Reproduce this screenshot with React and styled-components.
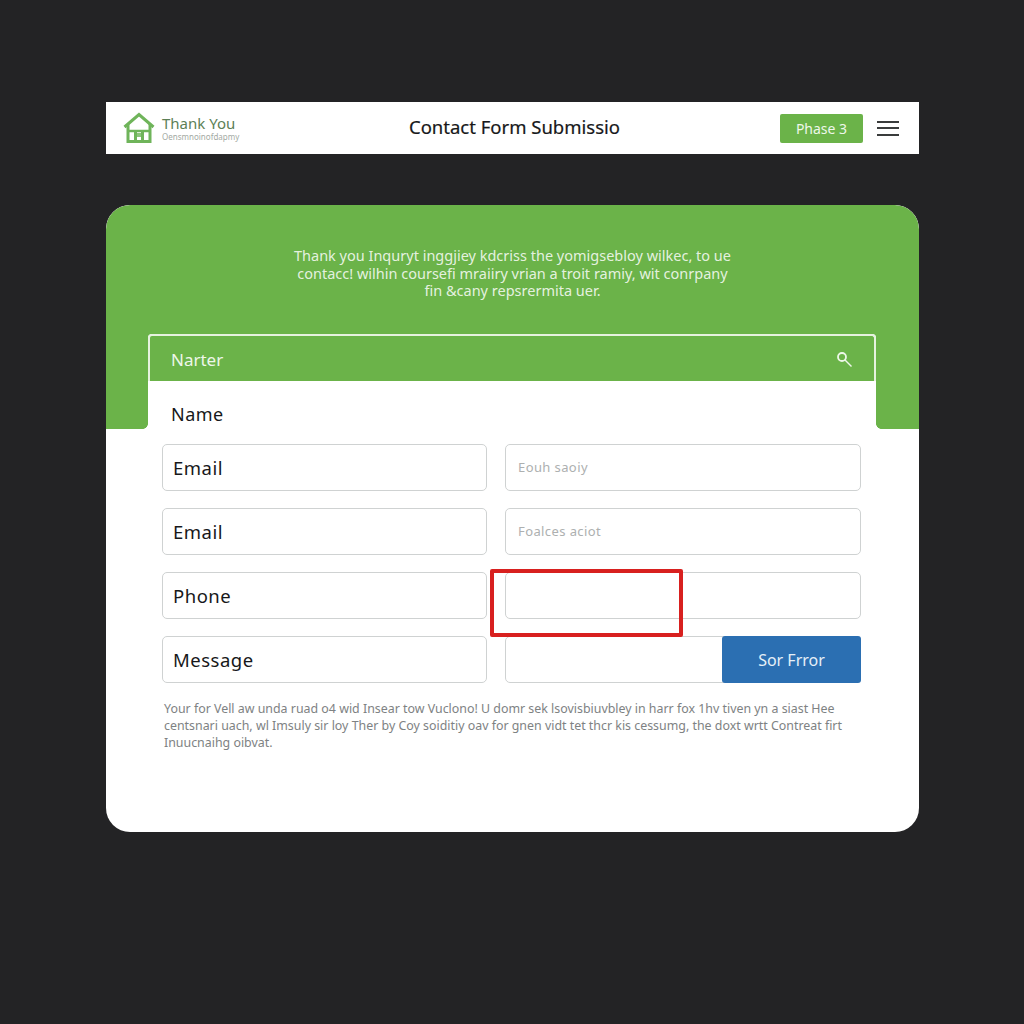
import React from "react";
import styled, { createGlobalStyle } from "styled-components";

const GREEN = "#6bb349";

const GlobalStyle = createGlobalStyle`
  html, body {
    margin: 0;
    padding: 0;
    background: #232325;
  }
  * {
    box-sizing: border-box;
  }
`;

const Page = styled.div`
  width: 1024px;
  height: 1024px;
  padding: 102px 105px 0 106px;
  display: flex;
  flex-direction: column;
  gap: 51px;
  font-family: "Noto Sans", "Open Sans", sans-serif;
  overflow: hidden;
`;

const Header = styled.header`
  height: 52px;
  background: #fff;
  display: grid;
  grid-template-columns: 1fr auto 1fr;
  align-items: center;
  padding: 0 20px 0 17px;
`;

const Brand = styled.div`
  display: flex;
  align-items: center;
  gap: 7px;
`;

const BrandText = styled.div`
  display: flex;
  flex-direction: column;
  margin-top: -2px;
`;

const BrandName = styled.span`
  font-size: 15px;
  line-height: 18px;
  color: #5c7f56;
`;

const BrandSub = styled.span`
  font-size: 8px;
  line-height: 9px;
  color: #a3aaa3;
`;

const Title = styled.h1`
  margin: 0 0 4px 7px;
  font-size: 18.5px;
  font-weight: 400;
  color: #17181a;
  -webkit-text-stroke: 0.2px #17181a;
`;

const HeaderActions = styled.div`
  display: flex;
  justify-content: flex-end;
  align-items: center;
  gap: 14px;
`;

const PhaseBadge = styled.div`
  width: 83px;
  height: 29px;
  background: ${GREEN};
  border-radius: 2px;
  color: #eef7e9;
  font-size: 14px;
  display: flex;
  align-items: center;
  justify-content: center;
`;

const Burger = styled.div`
  width: 22px;
  display: flex;
  flex-direction: column;
  gap: 4.5px;
  span {
    display: block;
    height: 2px;
    background: #3a3c3c;
  }
`;

const Card = styled.main`
  height: 627px;
  background: #fff;
  border-radius: 24px;
  overflow: hidden;
`;

const Hero = styled.section`
  height: 224px;
  background: ${GREEN};
  border-radius: 24px 24px 0 0;
  padding-top: 42px;
  text-align: center;
  color: rgba(255, 255, 255, 0.84);
  font-size: 14.5px;
  line-height: 17.5px;
`;

/* the small white corners where the green flaps meet the panel */
const Panel = styled.section`
  position: relative;
  margin: -95px 43px 0 42px;
  height: 95px;
  background: #fff;
  border-radius: 4px 4px 0 0;

  &::before,
  &::after {
    content: "";
    position: absolute;
    bottom: 0;
    width: 5px;
    height: 5px;
  }
  &::before {
    left: -5px;
    background: radial-gradient(circle at 0 0, ${GREEN} 4.5px, #fff 5px);
  }
  &::after {
    right: -5px;
    background: radial-gradient(circle at 100% 0, ${GREEN} 4.5px, #fff 5px);
  }
`;

const PanelBar = styled.div`
  height: 47px;
  background: ${GREEN};
  border: 2px solid #e6f2df;
  border-bottom: 0;
  border-radius: 4px 4px 0 0;
  padding: 1px 21px 0;
  display: flex;
  align-items: center;
  justify-content: space-between;
  color: #eef7e9;
  font-size: 17px;
`;

const NameLabel = styled.div`
  padding: 21px 0 0 23px;
  font-size: 18px;
  line-height: 24px;
  letter-spacing: 0.5px;
  color: #16171a;
`;

const Body = styled.section`
  padding: 15px 58px 0 56px;
`;

const FieldGrid = styled.div`
  display: grid;
  grid-template-columns: 325px 356px;
  grid-auto-rows: 47px;
  column-gap: 18px;
  row-gap: 17px;
`;

const Field = styled.div`
  position: relative;
  border: 1px solid #cfd2d2;
  border-radius: 5px;
  background: #fff;
  padding: 0 10px 1px;
  display: flex;
  align-items: center;
  font-size: 18.5px;
  letter-spacing: 0.5px;
  color: #17181a;
`;

const HintField = styled(Field)`
  padding: 0 12px 2px;
  font-size: 13px;
  letter-spacing: 0.4px;
  color: #adb0b0;
`;

const SubmitButton = styled.button`
  position: absolute;
  top: -1px;
  right: -1px;
  bottom: -1px;
  width: 139px;
  border: 0;
  border-radius: 3px;
  background: #2b6fb2;
  color: #e6f0f8;
  font: inherit;
  font-size: 16px;
  letter-spacing: 0;
`;

const ErrorOutline = styled.div`
  position: absolute;
  top: -4px;
  left: -16px;
  width: 193px;
  height: 68px;
  border: 4px solid #d8201f;
  border-radius: 2px;
  z-index: 1;
`;

const Note = styled.p`
  margin: 17px 0 0 2px;
  width: 684px;
  font-size: 12.4px;
  line-height: 17px;
  color: #7e8283;
  white-space: nowrap;
`;

const HouseIcon = () => (
  <svg width="32" height="32" viewBox="0 0 32 32" fill="none" stroke="#6fb45a">
    <path d="M1.5 15 L16 2.5 L30.5 15" strokeWidth="3" />
    <path d="M5 12 V29.5 H27 V12" strokeWidth="3" />
    <path d="M5 19 H27" strokeWidth="2.5" />
    <path d="M12.5 18 V29 M19.5 18 V29" strokeWidth="3" />
    <path d="M14 23 H18" strokeWidth="4" stroke="#8cc47b" />
  </svg>
);

const SearchIcon = () => (
  <svg width="17" height="17" viewBox="0 0 17 17" fill="none" stroke="#eef7e9">
    <circle cx="6" cy="6" r="4" strokeWidth="1.8" />
    <path d="M9 9 L15.5 15.5" strokeWidth="1.4" />
  </svg>
);

const rows = [
  { label: "Email", hint: "Eouh saoiy" },
  { label: "Email", hint: "Foalces aciot" },
  { label: "Phone", flagged: true },
  { label: "Message", action: "Sor Frror" },
];

export default function App() {
  return (
    <Page>
      <GlobalStyle />
      <Header>
        <Brand>
          <HouseIcon />
          <BrandText>
            <BrandName>Thank You</BrandName>
            <BrandSub>Oensmnoinofdapmy</BrandSub>
          </BrandText>
        </Brand>
        <Title>Contact Form Submissio</Title>
        <HeaderActions>
          <PhaseBadge>Phase 3</PhaseBadge>
          <Burger>
            <span />
            <span />
            <span />
          </Burger>
        </HeaderActions>
      </Header>
      <Card>
        <Hero>
          Thank you Inquryt inggjiey kdcriss the yomigsebloy wilkec, to ue
          <br />
          contacc! wilhin coursefi mraiiry vrian a troit ramiy, wit conrpany
          <br />
          fin &amp;cany repsrermita uer.
        </Hero>
        <Panel>
          <PanelBar>
            <span>Narter</span>
            <SearchIcon />
          </PanelBar>
          <NameLabel>Name</NameLabel>
        </Panel>
        <Body>
          <FieldGrid>
            {rows.map((row, i) => (
              <React.Fragment key={i}>
                <Field>{row.label}</Field>
                <HintField>
                  {row.hint}
                  {row.flagged && <ErrorOutline />}
                  {row.action && <SubmitButton>{row.action}</SubmitButton>}
                </HintField>
              </React.Fragment>
            ))}
          </FieldGrid>
          <Note>
            Your for Vell aw unda ruad o4 wid Insear tow Vuclono! U domr sek lsovisbiuvbley in harr fox 1hv tiven yn a siast Hee
            <br />
            centsnari uach, wl Imsuly sir loy Ther by Coy soiditiy oav for gnen vidt tet thcr kis cessumg, the doxt wrtt Contreat firt
            <br />
            Inuucnaihg oibvat.
          </Note>
        </Body>
      </Card>
    </Page>
  );
}
